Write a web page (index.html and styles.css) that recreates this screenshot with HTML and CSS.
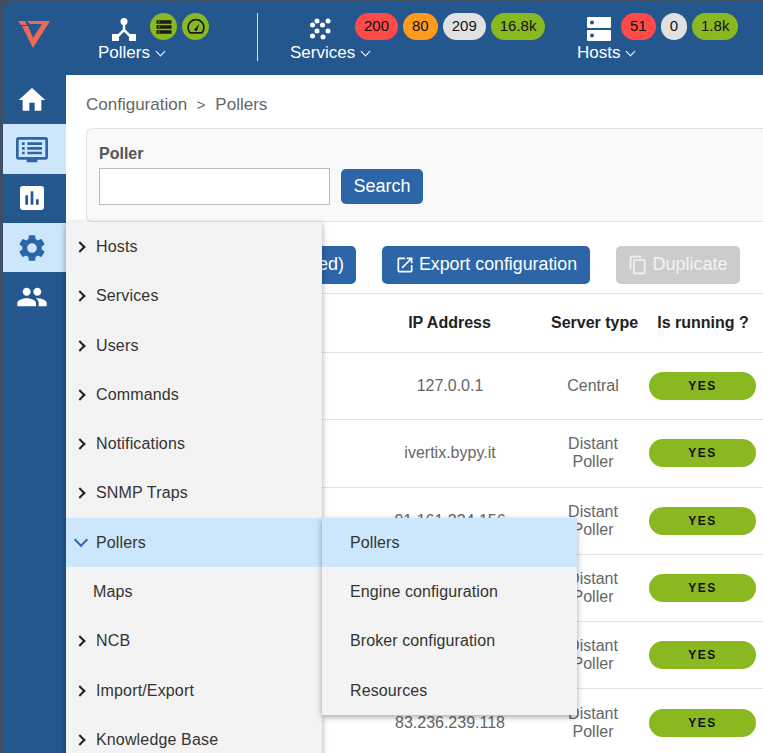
FILE: index.html
```html
<!DOCTYPE html>
<html lang="en">
<head>
  <meta charset="UTF-8" />
  <meta name="viewport" content="width=device-width, initial-scale=1.0"/>
  <title>Pollers</title>
  <link rel="stylesheet" href="styles.css">
</head>
<body>
  <div class="app">
    <header class="topbar">
      <svg class="logo" viewBox="0 0 32 27"><path fill="#ef6a56" d="M0 0h7l2 4H3zM4 5h6l5 12 9-14H12L9 0h23L15 27z"/></svg>

      <div class="nav-group pollers">
        <div class="nav-top">
          <svg class="nav-icon" viewBox="0 0 24 24"><circle cx="12" cy="4.500" r="3.500" fill="#fff"/><path d="M12 7v6L5 20M12 13l7 7" stroke="#fff" stroke-width="2.500" fill="none"/><path fill="#fff" d="M0 17h7v7H0zM17 17h7v7h-7z"/></svg>
          <span class="round"><svg viewBox="0 0 24 24"><path d="M3 4h18v4H3zM3 10h18v4H3zM3 16h18v4H3z" fill="#1a1a1a"/><path d="M5 5.500h2v1H5zM5 11.500h2v1H5zM5 17.500h2v1H5z" fill="#8ab820"/></svg></span>
          <span class="round"><svg viewBox="0 0 24 24"><path fill="none" stroke="#1a1a1a" stroke-width="2" d="M5 19a9.500 9.500 0 1 1 14 0z"/><path d="M9.500 15.500 16 8l-3 9z" fill="#1a1a1a"/></svg></span>
        </div>
        <div class="nav-label">Pollers <span class="caret"></span></div>
      </div>

      <div class="divider"></div>

      <div class="nav-group services">
        <div class="nav-top">
          <svg class="nav-icon" viewBox="0 0 24 24" fill="#fff"><circle cx="7" cy="4" r="2.500"/><circle cx="18" cy="4" r="2.500"/><circle cx="2.500" cy="8" r="2.500"/><circle cx="12.500" cy="8" r="2.500"/><circle cx="7" cy="14" r="2.500"/><circle cx="18" cy="14" r="2.500"/><circle cx="2.500" cy="19" r="2.500"/><circle cx="13" cy="20" r="2.500"/></svg>
          <span class="pill red">200</span>
          <span class="pill orange">80</span>
          <span class="pill grey">209</span>
          <span class="pill green">16.8k</span>
        </div>
        <div class="nav-label">Services <span class="caret"></span></div>
      </div>

      <div class="nav-group hosts">
        <div class="nav-top">
          <svg class="nav-icon" viewBox="0 0 24 24"><path fill="#fff" fill-rule="evenodd" d="M1 0h22a1 1 0 0 1 1 1v9a1 1 0 0 1-1 1H1a1 1 0 0 1-1-1V1a1 1 0 0 1 1-1zm4 3.500a2 2 0 1 0 0 4 2 2 0 0 0 0-4zM1 13h22a1 1 0 0 1 1 1v9a1 1 0 0 1-1 1H1a1 1 0 0 1-1-1v-9a1 1 0 0 1 1-1zm4 3.500a2 2 0 1 0 0 4 2 2 0 0 0 0-4z"/></svg>
          <span class="pill red">51</span>
          <span class="pill grey">0</span>
          <span class="pill green">1.8k</span>
        </div>
        <div class="nav-label">Hosts <span class="caret"></span></div>
      </div>
    </header>

    <div class="body-row">
      <nav class="sidebar">
        <a class="side-item"><svg viewBox="0 0 24 24"><path d="M10 20v-6h4v6h5v-8h3L12 3 2 12h3v8z"/></svg></a>
        <a class="side-item active"><svg viewBox="0 0 24 24"><path fill-rule="evenodd" d="M2 3h20a2 2 0 0 1 2 2v13a2 2 0 0 1-2 2h-6v2H8v-2H2a2 2 0 0 1-2-2V5a2 2 0 0 1 2-2zm0 2v13h20V5zm2.500 2h2v2h-2zm4 0h11v2h-11zm-4 3.500h2v2h-2zm4 0h11v2h-11zM4.500 14h2v2h-2zm4 0h11v2h-11z"/></svg></a>
        <a class="side-item"><svg viewBox="0 0 24 24"><path d="M19 3H5c-1.100 0-2 .9-2 2v14c0 1.100.9 2 2 2h14c1.100 0 2-.9 2-2V5c0-1.100-.9-2-2-2zM9 17H7v-7h2v7zm4 0h-2V7h2v10zm4 0h-2v-4h2v4z"/></svg></a>
        <a class="side-item active"><svg viewBox="0 0 24 24"><path d="M19.140 12.940c.04-.3.06-.61.06-.94 0-.32-.02-.64-.07-.94l2.030-1.580c.18-.14.230-.41.120-.61l-1.920-3.320c-.12-.22-.37-.29-.59-.22l-2.390.96c-.5-.38-1.030-.7-1.620-.94l-.36-2.540c-.04-.24-.24-.41-.48-.41h-3.840c-.24 0-.43.17-.47.41l-.36 2.540c-.59.24-1.130.57-1.620.94l-2.390-.96c-.22-.08-.47 0-.59.22L2.740 8.870c-.12.21-.08.47.12.61l2.030 1.580c-.05.3-.09.63-.09.94s.02.64.07.94l-2.030 1.580c-.18.14-.23.41-.12.61l1.920 3.320c.12.22.37.29.59.22l2.390-.96c.5.38 1.030.7 1.620.94l.36 2.540c.05.24.24.41.48.41h3.840c.24 0 .44-.17.47-.41l.36-2.540c.59-.24 1.130-.56 1.620-.94l2.390.96c.22.08.47 0 .59-.22l1.920-3.320c.12-.22.07-.47-.12-.61l-2.010-1.580zM12 15.600c-1.980 0-3.600-1.620-3.600-3.600s1.620-3.600 3.600-3.600 3.600 1.620 3.600 3.600-1.620 3.600-3.600 3.600z"/></svg></a>
        <a class="side-item"><svg viewBox="0 0 24 24"><path d="M16 11c1.660 0 2.990-1.340 2.990-3S17.660 5 16 5c-1.660 0-3 1.340-3 3s1.340 3 3 3zm-8 0c1.660 0 2.990-1.340 2.990-3S9.660 5 8 5C6.340 5 5 6.340 5 8s1.340 3 3 3zm0 2c-2.330 0-7 1.170-7 3.500V19h14v-2.500c0-2.330-4.670-3.500-7-3.500zm8 0c-.29 0-.62.02-.97.05 1.160.84 1.970 1.970 1.970 3.450V19h6v-2.500c0-2.330-4.670-3.500-7-3.500z"/></svg></a>
      </nav>

      <main class="content">
        <div class="breadcrumb">Configuration <span class="sep">&gt;</span> Pollers</div>

        <form class="filter">
          <label class="filter-label">Poller</label>
          <div class="filter-row">
            <input type="text" class="filter-input">
            <button type="button" class="btn search">Search</button>
          </div>
        </form>

        <div class="actions">
          <button type="button" class="btn apply">Export configuration (selected)</button>
          <button type="button" class="btn export"><svg viewBox="0 0 24 24"><path d="M19 19H5V5h7V3H5a2 2 0 0 0-2 2v14a2 2 0 0 0 2 2h14c1.100 0 2-.9 2-2v-7h-2v7zM14 3v2h3.590l-9.830 9.830 1.410 1.410L19 6.410V10h2V3h-7z"/></svg>Export configuration</button>
          <button type="button" class="btn disabled"><svg viewBox="0 0 24 24"><path d="M16 1H4c-1.100 0-2 .9-2 2v14h2V3h12V1zm3 4H8c-1.100 0-2 .9-2 2v14c0 1.100.9 2 2 2h11c1.100 0 2-.9 2-2V7c0-1.100-.9-2-2-2zm0 16H8V7h11v14z"/></svg>Duplicate</button>
        </div>

        <table class="pollers-table">
          <thead>
            <tr><th class="col-ip">IP Address</th><th class="col-type">Server type</th><th class="col-run">Is running ?</th></tr>
          </thead>
          <tbody>
            <tr><td class="col-ip">127.0.0.1</td><td class="col-type">Central</td><td class="col-run"><span class="yes">YES</span></td></tr>
            <tr><td class="col-ip">ivertix.bypy.it</td><td class="col-type">Distant Poller</td><td class="col-run"><span class="yes">YES</span></td></tr>
            <tr><td class="col-ip">91.161.224.156</td><td class="col-type">Distant Poller</td><td class="col-run"><span class="yes">YES</span></td></tr>
            <tr><td class="col-ip">91.161.224.157</td><td class="col-type">Distant Poller</td><td class="col-run"><span class="yes">YES</span></td></tr>
            <tr><td class="col-ip">91.161.224.158</td><td class="col-type">Distant Poller</td><td class="col-run"><span class="yes">YES</span></td></tr>
            <tr><td class="col-ip">83.236.239.118</td><td class="col-type">Distant Poller</td><td class="col-run"><span class="yes">YES</span></td></tr>
          </tbody>
        </table>
      </main>
    </div>

    <ul class="menu">
      <li class="menu-item"><span class="arrow"></span>Hosts</li>
      <li class="menu-item"><span class="arrow"></span>Services</li>
      <li class="menu-item"><span class="arrow"></span>Users</li>
      <li class="menu-item"><span class="arrow"></span>Commands</li>
      <li class="menu-item"><span class="arrow"></span>Notifications</li>
      <li class="menu-item"><span class="arrow"></span>SNMP Traps</li>
      <li class="menu-item open"><span class="arrow"></span>Pollers</li>
      <li class="menu-item plain">Maps</li>
      <li class="menu-item"><span class="arrow"></span>NCB</li>
      <li class="menu-item"><span class="arrow"></span>Import/Export</li>
      <li class="menu-item"><span class="arrow"></span>Knowledge Base</li>
    </ul>

    <ul class="submenu">
      <li class="sub-item current">Pollers</li>
      <li class="sub-item">Engine configuration</li>
      <li class="sub-item">Broker configuration</li>
      <li class="sub-item">Resources</li>
    </ul>
  </div>
</body>
</html>
```

FILE: styles.css
```css
* {
  box-sizing: border-box;
}
html, body {
  margin: 0;
  height: 100%;
  overflow: hidden;
}
body {
  background: #3e4f63;
  font-family: "Liberation Sans", Arial, sans-serif;
  font-size: 16px;
  color: #333;
}
.app {
  position: relative;
  height: 752px;
  margin: 1px 0 0 3px;
  background: #25578f;
  border-top-left-radius: 12px;
  overflow: hidden;
}

/* top bar */
.topbar {
  display: flex;
  height: 74px;
  background: #25578f;
  color: #fff;
}
.logo {
  width: 32px;
  height: 27px;
  margin: 20px 0 0 15px;
  flex: none;
}
.nav-group {
  padding-top: 12px;
  flex: none;
}
.nav-top {
  display: flex;
  align-items: flex-start;
  height: 27px;
}
.nav-icon {
  width: 24px;
  height: 24px;
  flex: none;
  margin-top: 4px;
}
.nav-label {
  margin-top: 3px;
  font-size: 17px;
  line-height: 19px;
  white-space: nowrap;
}
.caret {
  display: inline-block;
  width: 7px;
  height: 7px;
  margin: 0 0 3px 2px;
  border-right: 1.500px solid #fff;
  border-bottom: 1.500px solid #fff;
  transform: rotate(45deg);
}
.pollers {
  margin-left: 48px;
  width: 159px;
}
.pollers .nav-icon {
  margin-left: 14px;
  margin-right: 14px;
}
.divider {
  width: 1px;
  height: 48px;
  margin-top: 12px;
  background: #d5dfea;
  flex: none;
}
.services {
  margin-left: 32px;
  width: 287px;
}
.services .nav-icon {
  margin-left: 20px;
  margin-right: 21px;
}
.hosts .nav-icon {
  margin-left: 10px;
  margin-right: 10px;
}
.round {
  width: 27px;
  height: 27px;
  margin-right: 5px;
  border-radius: 50%;
  background: #8ab820;
  display: flex;
  align-items: center;
  justify-content: center;
}
.round svg {
  width: 20px;
  height: 20px;
}
.pill {
  height: 27px;
  line-height: 26px;
  padding: 0 9px;
  margin-right: 5px;
  border-radius: 14px;
  color: #111;
  font-size: 15px;
  text-align: center;
}
.pill.red { background: #ff4a4a; }
.pill.orange { background: #ff9a1f; }
.pill.grey { background: #e1e1e1; }
.pill.green { background: #8ab820; }

/* sidebar */
.body-row {
  display: flex;
  height: 678px;
}
.sidebar {
  width: 63px;
  flex: none;
}
.side-item {
  display: flex;
  align-items: center;
  justify-content: center;
  height: 49.300px;
  padding-right: 5px;
  fill: #fff;
}
.side-item svg {
  width: 32px;
  height: 32px;
}
.side-item.active {
  background: #cce6fc;
  fill: #2d66a8;
}

/* page */
.content {
  flex: 1;
  min-width: 0;
  background: #fff;
  padding: 20px 0 0 20px;
  overflow: hidden;
}
.breadcrumb {
  color: #666;
  font-size: 17px;
  line-height: 19px;
}
.breadcrumb .sep {
  margin: 0 5px;
  font-size: 15px;
}
.filter {
  margin-top: 14px;
  height: 94px;
  padding: 16px 12px;
  background: #f9f9f9;
  border: 1px solid #e3e3e3;
  border-right: none;
  border-radius: 6px 0 0 6px;
}
.filter-label {
  display: block;
  font-weight: bold;
  font-size: 16px;
  color: #555;
  line-height: 17px;
}
.filter-row {
  display: flex;
  align-items: center;
  gap: 11px;
  margin-top: 6px;
}
.filter-input {
  width: 231px;
  height: 37px;
  border: 1px solid #bbb;
  background: #fff;
}
.btn {
  display: inline-flex;
  align-items: center;
  justify-content: center;
  height: 38px;
  border: none;
  border-radius: 5px;
  background: #2d66a8;
  color: #fff;
  font-family: inherit;
  font-size: 18px;
  white-space: nowrap;
}
.btn svg {
  width: 20px;
  height: 20px;
  fill: #fff;
  margin-right: 4px;
}
.btn.search {
  width: 82px;
  height: 35px;
}
.actions {
  display: flex;
  align-items: center;
  margin-top: 24px;
  margin-left: -20px;
}
.actions .btn {
  padding-bottom: 2px;
}
.btn.apply {
  width: 290px;
  flex: none;
  justify-content: flex-end;
  padding-right: 12px;
}
.btn.export {
  width: 208px;
  margin-left: 26px;
  flex: none;
  font-size: 17.800px;
}
.btn.disabled {
  width: 124px;
  margin-left: 26px;
  flex: none;
  background: #ccc;
  color: #f3f3f3;
}
.btn.disabled svg {
  fill: #f3f3f3;
}
.pollers-table {
  width: 697px;
  margin-top: 9px;
  margin-left: -20px;
  border-collapse: collapse;
  table-layout: fixed;
  color: #666;
}
.pollers-table tr {
  border-top: 1.500px solid #e3e3e3;
}
.pollers-table th {
  height: 59px;
  color: #222;
  font-size: 16px;
  text-align: center;
  border-bottom: 1.500px solid #e3e3e3;
  white-space: nowrap;
}
.pollers-table td {
  height: 67.300px;
  text-align: center;
  line-height: 18px;
  padding: 0;
}
.pollers-table .col-ip {
  width: 471px;
  padding-left: 297px;
}
.pollers-table .col-type {
  width: 112px;
  padding: 0 14px;
}
.pollers-table .col-run {
  width: 114px;
  padding-right: 7px;
}
.yes {
  display: block;
  width: 107px;
  height: 28px;
  line-height: 28px;
  border-radius: 14px;
  background: #8ab820;
  color: #111;
  font-size: 12px;
  font-weight: bold;
  letter-spacing: 1.500px;
}

/* config menu */
.menu, .submenu {
  position: absolute;
  margin: 0;
  padding: 0;
  list-style: none;
  background: #f3f3f3;
  box-shadow: 0 2px 6px rgba(0, 0, 0, 0.35);
}
.menu {
  left: 63px;
  top: 221.300px;
  width: 256px;
}
.menu-item {
  display: flex;
  align-items: center;
  height: 49.300px;
  padding-left: 31px;
  letter-spacing: 0.150px;
  color: #333;
}
.arrow {
  width: 8px;
  height: 8px;
  margin-left: -21px;
  margin-right: 12px;
  border-right: 2px solid #222;
  border-top: 2px solid #222;
  transform: rotate(45deg);
  flex: none;
}
.menu-item.open {
  background: #cce6fc;
}
.menu-item.open .arrow {
  width: 10px;
  height: 10px;
  margin-right: 10px;
  margin-top: -5px;
  border-width: 2.500px;
  border-color: #2d66a8;
  transform: rotate(135deg);
}
.menu-item.plain {
  padding-left: 27px;
}
.submenu {
  left: 319px;
  top: 517px;
  width: 255px;
}
.sub-item {
  display: flex;
  align-items: center;
  height: 49.300px;
  padding-left: 28px;
  letter-spacing: 0.100px;
  color: #333;
}
.sub-item.current {
  background: #cce6fc;
}
```
